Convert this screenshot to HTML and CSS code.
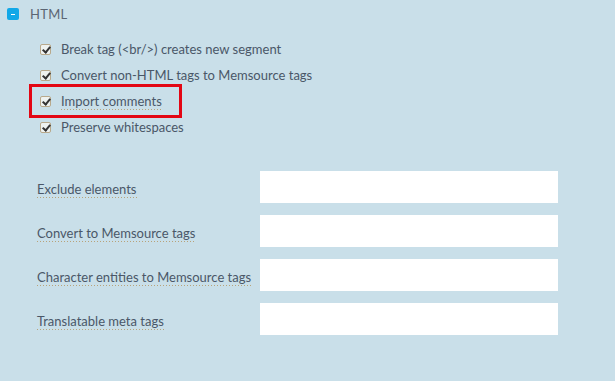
FILE: index.html
```html
<!DOCTYPE html>
<html lang="en">
<head>
    <meta charset="UTF-8">
    <title>HTML settings</title>
    <link rel="stylesheet" href="styles.css">
</head>
<body>
    <div class="panel">
        <div class="section-head">
            <span class="toggle"></span>
            <span class="section-title">HTML</span>
        </div>
        <div class="options">
            <label class="option"><span class="check"></span><span>Break tag (&lt;br/&gt;) creates new segment</span></label>
            <label class="option"><span class="check"></span><span>Convert non-HTML tags to Memsource tags</span></label>
            <label class="option highlight"><span class="check"></span><span class="hint">Import comments</span></label>
            <label class="option"><span class="check"></span><span>Preserve whitespaces</span></label>
        </div>
        <div class="fields">
            <div class="field"><div class="field-cell"><span class="field-label">Exclude elements</span></div><input class="field-input" type="text"></div>
            <div class="field"><div class="field-cell"><span class="field-label">Convert to Memsource tags</span></div><input class="field-input" type="text"></div>
            <div class="field"><div class="field-cell"><span class="field-label">Character entities to Memsource tags</span></div><input class="field-input" type="text"></div>
            <div class="field"><div class="field-cell"><span class="field-label">Translatable meta tags</span></div><input class="field-input" type="text"></div>
        </div>
    </div>
</body>
</html>
```

FILE: styles.css
```css
body {
    margin: 0;
    background-color: #c9dfe9;
    font-family: Lato, "Open Sans", sans-serif;
    font-size: 13px;
    color: #4a5768;
}

.panel {
    width: 615px;
    height: 381px;
    box-sizing: border-box;
    padding: 8px 0 0 7px;
}

.section-head {
    display: flex;
    align-items: center;
    height: 12px;
}

.toggle {
    position: relative;
    width: 12px;
    height: 12px;
    background-color: #11a8e8;
    border-radius: 2px;
}

.toggle::after {
    content: "";
    position: absolute;
    left: 4px;
    top: 6px;
    width: 4px;
    height: 1px;
    background: white;
}

.section-title {
    margin-left: 11px;
    font-size: 13px;
    letter-spacing: 0.3px;
    color: #5b6573;
}

.options {
    display: flex;
    flex-direction: column;
    margin: 16px 0 0 33px;
}

.option {
    display: flex;
    align-items: center;
    height: 26px;
    white-space: nowrap;
}

.option.highlight {
    width: 139px;
    height: 28px;
    margin: -4px 0 -4px -11px;
    padding-left: 8px;
    border: 3px solid #e30613;
}

.check {
    position: relative;
    width: 9px;
    height: 9px;
    margin-right: 10px;
    border: 1px solid #b8a98c;
    border-radius: 2px;
    background: #eef2f0;
    flex-shrink: 0;
}

.check::after {
    content: "";
    position: absolute;
    left: 3px;
    top: 0;
    width: 3px;
    height: 6px;
    border: solid #333;
    border-width: 0 2px 2px 0;
    transform: rotate(40deg);
}

.hint,
.field-label {
    line-height: 16px;
    background-image: linear-gradient(to right, #b8a37a 50%, transparent 50%);
    background-size: 3px 1px;
    background-repeat: repeat-x;
    background-position: 0 100%;
    padding-bottom: 1px;
}

.fields {
    display: flex;
    flex-direction: column;
    gap: 12px;
    margin: 31px 0 0 30px;
}

.field {
    display: flex;
    align-items: center;
    height: 32px;
}

.field-cell {
    width: 223px;
    margin-top: 4px;
    white-space: nowrap;
}

.field-input {
    width: 298px;
    height: 32px;
    box-sizing: border-box;
    border: none;
    background: white;
    margin: 0;
}
```
